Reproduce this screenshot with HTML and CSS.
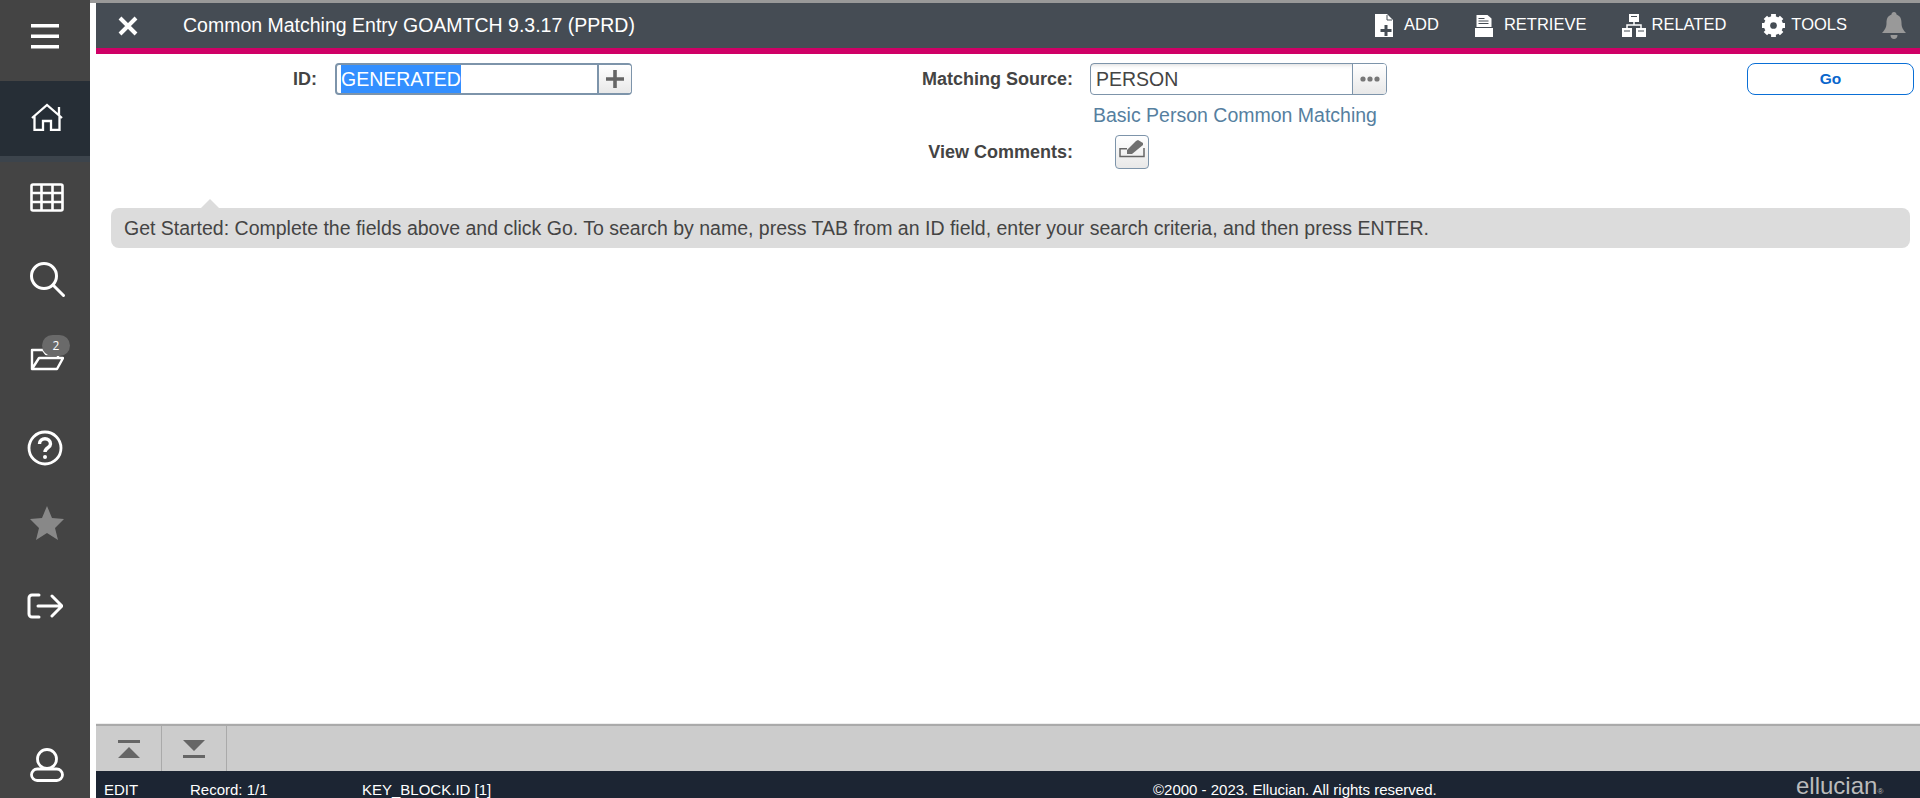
FILE: index.html
```html
<!DOCTYPE html>
<html lang="en">
<head>
    <meta charset="UTF-8">
    <title>Common Matching Entry</title>
    <link rel="stylesheet" href="styles.css">
</head>
<body>
    <nav class="sidebar">
        <div class="side-menu">
            <svg class="ico" width="28" height="25" viewBox="0 0 28 25"><path d="M0 1.700h28M0 12.300h28M0 22.700h28" stroke="#fff" stroke-width="3.400" fill="none"/></svg>
        </div>
        <div class="side-home">
            <svg class="ico" width="32" height="28" viewBox="0 0 32 28" fill="none" stroke="#fff" stroke-width="2.300"><path d="M1 15 16 2l15 13M3.500 13v14h8.500v-9h8v9h8.500V13M28 4v8"/></svg>
        </div>
        <div class="side-strip"></div>
        <div class="side-list">
            <svg class="ico grid-ico" width="34" height="29" viewBox="0 0 34 29" fill="none" stroke="#fff" stroke-width="2.600"><rect x="1.500" y="1.500" width="31" height="26" rx="1.500"/><path d="M1.500 10h31M1.500 19h31M11.500 1.500v26M22.500 1.500v26"/></svg>
            <svg class="ico search-ico" width="36" height="36" viewBox="0 0 36 36" fill="none" stroke="#fff" stroke-width="3" stroke-linecap="round"><circle cx="14" cy="14" r="12.500"/><path d="M24 24l9.500 9.500"/></svg>
            <div class="folder-box">
                <svg class="ico" width="34" height="23" viewBox="0 0 34 23" fill="none" stroke="#fff" stroke-width="2.400" stroke-linejoin="round"><path d="M2 21V2h11l3 4h12v4M2 21h25l6-11H9z"/></svg>
                <span class="badge">2</span>
            </div>
            <svg class="ico help-ico" width="36" height="36" viewBox="0 0 36 36" fill="none" stroke="#fff" stroke-width="2.800"><circle cx="18" cy="18" r="16"/><path d="M12.500 14c0-7 11-7 11 0 0 4-5.500 3.500-5.500 8" stroke-width="3.400"/><circle cx="18" cy="27" r="2" fill="#fff" stroke="none"/></svg>
            <svg class="ico star-ico" width="34" height="34" viewBox="0 0 34 34"><path d="M17 0l5 12 12 1-9 9 3 12-11-7-11 7 3-12-9-9 12-1z" fill="#888"/></svg>
            <svg class="ico exit-ico" width="36" height="26" viewBox="0 0 36 26" fill="none" stroke="#fff" stroke-width="3" stroke-linecap="round" stroke-linejoin="round"><path d="M12 2H5a3 3 0 0 0-3 3v16a3 3 0 0 0 3 3h7M11 13h23M25 3l10 10-10 10"/></svg>
        </div>
        <div class="side-user">
            <svg class="ico" width="34" height="34" viewBox="0 0 34 34" fill="none" stroke="#fff" stroke-width="2.800"><circle cx="17" cy="11" r="9.500"/><rect x="1.500" y="21" width="31" height="11.500" rx="5.700"/></svg>
        </div>
    </nav>

    <div class="main">
        <div class="top-strip"></div>
        <div class="content">
            <header class="header">
                <svg class="close-ico" width="20" height="20" viewBox="0 0 20 20"><path d="M2 2l16 16M18 2 2 18" stroke="#fff" stroke-width="4" fill="none"/></svg>
                <h1 class="title">Common Matching Entry GOAMTCH 9.3.17 (PPRD)</h1>
                <div class="actions">
                    <a class="action action-add">
                        <svg width="19" height="23" viewBox="0 0 19 23"><path d="M0 0h12l6 6v17H0z" fill="#fff"/><path d="M12 1v5h5" fill="none" stroke="#454c54" stroke-width="1"/><path d="M11 11v11M5.500 16.500h11" stroke="#454c54" stroke-width="3"/></svg>
                        <span class="action-text">ADD</span>
                    </a>
                    <a class="action action-retrieve">
                        <svg width="18" height="22" viewBox="0 0 18 22"><path d="M1.500 0h11l4 3.500V12h-15z" fill="#fff"/><path d="M3.500 3.500h6M3.500 6h10M3.500 8.500h10" stroke="#454c54" stroke-width="1.200"/><path d="M0 13h18v9H0z" fill="#fff"/></svg>
                        <span class="action-text">RETRIEVE</span>
                    </a>
                    <a class="action action-related">
                        <svg width="24" height="23" viewBox="0 0 24 23"><path d="M7 0h10v8H7zM0 14h10v9H0zM14 14h10v9H14z" fill="#fff"/><path d="M9 2.500h6M2 17h6M16 17h6" stroke="#454c54" stroke-width="1"/><path d="M12 8v3M5 14v-3h14v3" stroke="#fff" stroke-width="1.500" fill="none"/></svg>
                        <span class="action-text">RELATED</span>
                    </a>
                    <a class="action action-tools">
                        <svg width="23" height="23" viewBox="0 0 24 24"><circle cx="12" cy="12" r="7" fill="none" stroke="#fff" stroke-width="6"/><path d="M12 0v24M0 12h24M3.500 3.500l17 17M20.500 3.500l-17 17" stroke="#fff" stroke-width="5"/><circle cx="12" cy="12" r="3.500" fill="#454c54"/></svg>
                        <span class="action-text">TOOLS</span>
                    </a>
                    <svg class="bell" width="24" height="27" viewBox="0 0 24 27"><path d="M12 0c1.500 0 2.500 1 2.500 2.500C18.500 4 19.500 7 19.500 11c0 5 2 7 4.500 10H0c2.500-3 4.500-5 4.500-10 0-4 1-7 5-8.500C9.500 1 10.500 0 12 0z" fill="#999"/><path d="M8.500 23h7c0 2.500-1.500 4-3.500 4s-3.500-1.500-3.500-4z" fill="#999"/></svg>
                </div>
            </header>
            <div class="pink-bar"></div>

            <section class="form">
                <div class="id-col">
                    <label class="lbl id-lbl">ID:</label>
                    <div class="field field-id">
                        <div class="field-text"><span class="selected">GENERATED</span></div>
                        <button class="field-btn">
                            <svg width="18" height="18" viewBox="0 0 18 18"><path d="M9 0v18M0 9h18" stroke="#666" stroke-width="3.600"/></svg>
                        </button>
                    </div>
                </div>
                <div class="source-col">
                    <div class="row">
                        <label class="lbl src-lbl">Matching Source:</label>
                        <div class="field field-src">
                            <div class="field-text src-text">PERSON</div>
                            <button class="field-btn">
                                <svg width="20" height="6" viewBox="0 0 20 6" fill="#777"><circle cx="3" cy="3" r="2.600"/><circle cx="10" cy="3" r="2.600"/><circle cx="17" cy="3" r="2.600"/></svg>
                            </button>
                        </div>
                    </div>
                    <div class="src-desc">Basic Person Common Matching</div>
                    <div class="row comments-row">
                        <label class="lbl src-lbl">View Comments:</label>
                        <button class="comment-btn">
                            <svg width="26" height="18" viewBox="0 0 26 18"><path d="M8 8.800H1V16.500h24V8" fill="none" stroke="#666" stroke-width="1.500"/><path d="M8 14v-4l9-9 2-1 5 3v2L13 14z" fill="#707070"/></svg>
                        </button>
                    </div>
                </div>
                <button class="go-btn">Go</button>
            </section>

            <div class="tip">Get Started: Complete the fields above and click Go. To search by name, press TAB from an ID field, enter your search criteria, and then press ENTER.</div>

            <div class="toolbar">
                <button class="tool-btn">
                    <svg width="22" height="18" viewBox="0 0 22 18"><path d="M0 0h22v3H0zM11 7l11 11H0z" fill="#666"/></svg>
                </button>
                <button class="tool-btn tool-btn-next">
                    <svg width="22" height="18" viewBox="0 0 22 18"><path d="M0 0h22L11 11zM0 15h22v3H0z" fill="#666"/></svg>
                </button>
            </div>
            <footer class="status">
                <span class="st-mode">EDIT</span>
                <span class="st-record">Record: 1/1</span>
                <span class="st-block">KEY_BLOCK.ID [1]</span>
                <span class="st-copy">©2000 - 2023. Ellucian. All rights reserved.</span>
                <span class="st-logo">ellucian<small>®</small></span>
            </footer>
        </div>
    </div>
</body>
</html>
```

FILE: styles.css
```css
* {
    box-sizing: border-box;
}

html, body {
    height: 100%;
}

body {
    margin: 0;
    display: flex;
    overflow: hidden;
    font-family: "Liberation Sans", Arial, sans-serif;
    color: #444;
    background: #fff;
}

button {
    font-family: inherit;
    padding: 0;
}

.ico {
    display: block;
}

/* Sidebar */
.sidebar {
    width: 90px;
    flex: none;
    display: flex;
    flex-direction: column;
    background: #444;
}

.side-menu {
    height: 81px;
    padding: 24px 0 0 31px;
}

.side-home {
    height: 75px;
    padding: 22px 0 0 31px;
    background: #262e36;
}

.side-strip {
    height: 6px;
    background: #3c444c;
}

.side-list {
    display: flex;
    flex-direction: column;
    align-items: flex-start;
    padding: 21px 0 0 30px;
}

.search-ico { margin-top: 50px; }
.folder-box { position: relative; margin-top: 50px; }
.help-ico { margin-top: 59px; margin-left: -3px; }
.star-ico { margin-top: 40px; }
.exit-ico { margin-top: 53px; margin-left: -3px; }

.badge {
    position: absolute;
    left: 12px;
    top: -13px;
    width: 28px;
    height: 21px;
    border-radius: 11px;
    background: #6a6a6a;
    color: #fff;
    font: 12px/21px "Open Sans", sans-serif;
    text-align: center;
}

.side-user {
    margin-top: auto;
    padding: 0 0 16px 30px;
}

/* Main column */
.main {
    flex: 1;
    min-width: 0;
    display: flex;
    flex-direction: column;
}

.top-strip {
    height: 3px;
    flex: none;
    background: #999;
}

.content {
    flex: 1;
    min-height: 0;
    margin-left: 6px;
    display: flex;
    flex-direction: column;
}

.header {
    height: 45px;
    flex: none;
    display: flex;
    align-items: center;
    background: #454c54;
    color: #fff;
}

.close-ico {
    margin-left: 22px;
}

.title {
    margin: 0 0 0 45px;
    font-size: 19.5px;
    font-weight: normal;
}

.actions {
    margin-left: auto;
    display: flex;
    align-items: center;
}

.action {
    display: flex;
    align-items: center;
    font-size: 16.5px;
    color: #fff;
}

.action-text {
    padding-bottom: 3px;
}

.action-add svg { margin-right: 10px; }
.action-retrieve { margin-left: 36px; }
.action-retrieve svg { margin-right: 11px; }
.action-related { margin-left: 36px; }
.action-related svg { margin-right: 5px; }
.action-tools { margin-left: 36px; }
.action-tools svg { margin-right: 6px; }

.bell {
    margin: 0 14px 0 35px;
}

.pink-bar {
    height: 6px;
    flex: none;
    background: #cf0066;
}

/* Form */
.form {
    display: flex;
    align-items: flex-start;
    padding-top: 9px;
    height: 154px;
    flex: none;
}

.id-col {
    display: flex;
    align-items: center;
    width: 536px;
    flex: none;
}

.lbl {
    flex: none;
    font-size: 18px;
    font-weight: bold;
    color: #444;
}

.id-lbl {
    width: 221px;
    text-align: right;
    margin-right: 18px;
}

.field {
    display: flex;
    flex: none;
    height: 32px;
    border: 1px solid #7d94aa;
    border-radius: 4px;
}

.field-id {
    width: 297px;
    border-width: 2px 1px 2px 2px;
}

.field-src {
    width: 297px;
}

.field-text {
    flex: 1;
    padding-left: 4px;
    font-size: 19.5px;
    line-height: 28px;
}

.src-text {
    padding-left: 5px;
    line-height: 30px;
    box-shadow: inset 0 4px 4px -3px rgba(0, 0, 0, 0.15);
}

.selected {
    display: inline-block;
    background: #338fff;
    color: #fff;
}

.field-btn {
    width: 34px;
    flex: none;
    border: 0;
    border-left: 1px solid #7d94aa;
    border-radius: 0 3px 3px 0;
    background: linear-gradient(#fff, #e8e8e8);
    display: flex;
    align-items: center;
    justify-content: center;
}

.field-id .field-btn {
    border-left-width: 2px;
}

.source-col {
    width: 760px;
    flex: none;
}

.row {
    display: flex;
    align-items: center;
}

.src-lbl {
    width: 441px;
    text-align: right;
    margin-right: 17px;
}

.src-desc {
    margin: 9px 0 0 461px;
    font-size: 19.5px;
    line-height: 22px;
    white-space: nowrap;
    color: #567f9f;
}

.comments-row {
    margin-top: 9px;
}

.comment-btn {
    width: 34px;
    height: 34px;
    margin-left: 25px;
    padding-top: 4px;
    border: 1px solid #7d94aa;
    border-radius: 4px;
    background: linear-gradient(#fff, #e8e8e8);
    display: flex;
    align-items: flex-start;
    justify-content: center;
}

.go-btn {
    width: 167px;
    height: 32px;
    margin-left: auto;
    margin-right: 6px;
    border: 1px solid #0a6fd6;
    border-radius: 8px;
    background: #fff;
    color: #0a66cc;
    font-size: 15.5px;
    font-weight: bold;
}

/* Tip */
.tip {
    position: relative;
    height: 40px;
    flex: none;
    margin: 0 10px 0 15px;
    padding-left: 13px;
    background: #dcdcdc;
    border-radius: 8px;
    font-size: 19.5px;
    line-height: 40px;
    white-space: nowrap;
    color: #444;
}

.tip::before {
    content: '';
    position: absolute;
    left: 90px;
    top: -9px;
    border-left: 9px solid transparent;
    border-right: 9px solid transparent;
    border-bottom: 9px solid #dcdcdc;
}

/* Bottom */
.toolbar {
    margin-top: auto;
    height: 47px;
    flex: none;
    display: flex;
    background: #ccc;
    border-top: 2px solid #aaa;
    box-shadow: 0 -1px 0 #eee;
}

.tool-btn {
    width: 66px;
    border: 0;
    border-right: 1px solid #aaa;
    background: transparent;
    display: flex;
    align-items: center;
    justify-content: center;
}

.tool-btn-next {
    width: 65px;
}

.status {
    height: 27px;
    flex: none;
    display: flex;
    overflow: hidden;
    background: #1c2533;
    color: #fff;
    font-size: 15px;
    line-height: 38px;
}

.st-mode { margin-left: 8px; width: 86px; }
.st-record { width: 172px; }
.st-block { width: 791px; }
.st-copy { width: 643px; }

.st-logo {
    font-size: 24px;
    line-height: 29px;
    color: #bbb;
}

.st-logo small {
    font-size: 8px;
}
```
